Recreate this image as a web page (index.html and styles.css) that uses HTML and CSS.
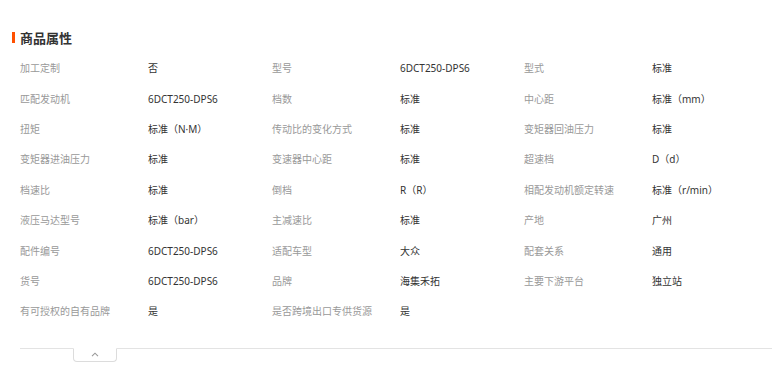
FILE: index.html
```html
<!DOCTYPE html>
<html lang="zh-CN">
<head>
<meta charset="utf-8">
<title>商品属性</title>
<link rel="stylesheet" href="styles.css">
</head>
<body>
<section class="attrs">
  <h2 class="attrs-title">商品属性</h2>
  <div class="attrs-grid">
    <span class="k">加工定制</span><span class="v">否</span>
    <span class="k">型号</span><span class="v">6DCT250-DPS6</span>
    <span class="k">型式</span><span class="v">标准</span>

    <span class="k">匹配发动机</span><span class="v">6DCT250-DPS6</span>
    <span class="k">档数</span><span class="v">标准</span>
    <span class="k">中心距</span><span class="v">标准（mm）</span>

    <span class="k">扭矩</span><span class="v">标准（N·M）</span>
    <span class="k">传动比的变化方式</span><span class="v">标准</span>
    <span class="k">变矩器回油压力</span><span class="v">标准</span>

    <span class="k">变矩器进油压力</span><span class="v">标准</span>
    <span class="k">变速器中心距</span><span class="v">标准</span>
    <span class="k">超速档</span><span class="v">D（d）</span>

    <span class="k">档速比</span><span class="v">标准</span>
    <span class="k">倒档</span><span class="v">R（R）</span>
    <span class="k">相配发动机额定转速</span><span class="v">标准（r/min）</span>

    <span class="k">液压马达型号</span><span class="v">标准（bar）</span>
    <span class="k">主减速比</span><span class="v">标准</span>
    <span class="k">产地</span><span class="v">广州</span>

    <span class="k">配件编号</span><span class="v">6DCT250-DPS6</span>
    <span class="k">适配车型</span><span class="v">大众</span>
    <span class="k">配套关系</span><span class="v">通用</span>

    <span class="k">货号</span><span class="v">6DCT250-DPS6</span>
    <span class="k">品牌</span><span class="v">海集禾拓</span>
    <span class="k">主要下游平台</span><span class="v">独立站</span>

    <span class="k">有可授权的自有品牌</span><span class="v">是</span>
    <span class="k">是否跨境出口专供货源</span><span class="v">是</span>
  </div>
  <div class="attrs-foot">
    <button class="fold" type="button" aria-label="收起">
      <svg width="8" height="5" viewBox="0 0 8 5"><path d="M1 4.2 L4 1.2 L7 4.2" fill="none" stroke="#999" stroke-width="1.1"/></svg>
    </button>
  </div>
</section>
</body>
</html>
```

FILE: styles.css
```css
html, body {
  margin: 0;
  padding: 0;
  background: #fff;
}
body {
  font-family: "Noto Sans", "Noto Sans CJK SC", sans-serif;
  width: 772px;
  height: 368px;
  overflow: hidden;
}
.attrs {
  padding: 30px 0 0 20px;
}
.attrs-title {
  position: relative;
  margin: 0;
  font-size: 13px;
  line-height: 16px;
  font-weight: 700;
  color: #333;
  font-family: "Noto Sans CJK SC", sans-serif;
}
.attrs-title::before {
  content: "";
  position: absolute;
  left: -8px;
  top: 2px;
  width: 3px;
  height: 11px;
  background: #ff5000;
}
.attrs-grid {
  display: grid;
  grid-template-columns: 128px 124px 128px 124px 128px 1fr;
  grid-auto-rows: 30.4px;
  align-items: center;
  margin-top: 7px;
  font-size: 10px;
  line-height: 14px;
}
.k {
  color: #999;
  letter-spacing: 0;
  font-family: "Noto Sans CJK SC", sans-serif;
}
.v {
  color: #333;
  font-family: "Noto Sans", "Noto Sans CJK SC", sans-serif;
}
.attrs-foot {
  margin-top: 21px;
  border-top: 1px solid #e3e3e3;
  padding-left: 53px;
}
.fold {
  display: flex;
  align-items: center;
  justify-content: center;
  width: 44px;
  height: 14px;
  margin-top: -1px;
  padding: 0;
  border: 1px solid #dcdcdc;
  border-top: 1px solid #fff;
  border-radius: 0 0 4px 4px;
  background: #fff;
}
```
